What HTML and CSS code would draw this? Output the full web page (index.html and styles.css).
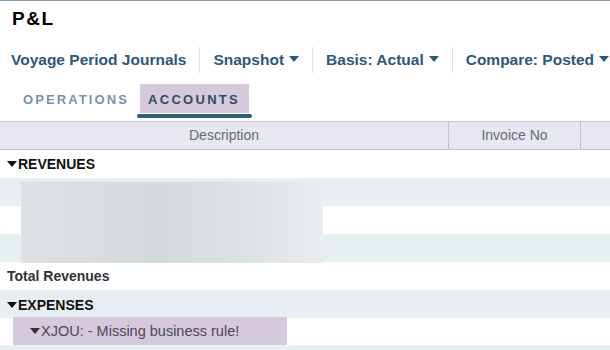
FILE: index.html
```html
<!DOCTYPE html>
<html>

<head>
    <meta charset="utf-8">
    <title>P&amp;L</title>
    <link rel="stylesheet" href="styles.css">
</head>

<body>
    <section id="report">
        <h1 class="report-title">P&amp;L</h1>
        <nav class="toolbar">
            <span class="tool-item">Voyage Period Journals</span>
            <span class="tool-item dropdown">Snapshot</span>
            <span class="tool-item dropdown">Basis: Actual</span>
            <span class="tool-item dropdown">Compare: Posted</span>
        </nav>
        <div class="tabs">
            <div class="tab"><span class="tab-label">OPERATIONS</span></div>
            <div class="tab active"><span class="tab-label">ACCOUNTS</span></div>
        </div>
        <div class="grid">
            <div class="grid-head">
                <div class="col col-desc">Description</div>
                <div class="col col-inv">Invoice No</div>
                <div class="col col-rest"></div>
            </div>
            <div class="grid-body">
                <div class="row group"><span class="caret"></span>REVENUES</div>
                <div class="row alt"></div>
                <div class="row"></div>
                <div class="row alt"></div>
                <div class="row total">Total Revenues</div>
                <div class="row alt group"><span class="caret"></span>EXPENSES</div>
                <div class="row">
                    <span class="rule-cell"><span class="caret"></span>XJOU: - Missing business rule!</span>
                </div>
                <div class="row alt"></div>
                <div class="redacted"></div>
            </div>
        </div>
    </section>
</body>

</html>
```

FILE: styles.css
```css
body {
    margin: 0;
    font-family: 'Liberation Sans', Arial, sans-serif;
    background: #fff;
    overflow: hidden;
}

#report {
    border-top: 1px solid #8a9bad;
}

.report-title {
    margin: 0;
    padding: 7px 0 0 12px;
    height: 37px;
    box-sizing: border-box;
    font-size: 19px;
    font-weight: 900;
    letter-spacing: 1.5px;
    color: #000;
    line-height: 22px;
}

.toolbar {
    display: flex;
    align-items: center;
    height: 26px;
    margin-top: 9px;
    padding-left: 11px;
}

.tool-item {
    font-size: 15.5px;
    font-weight: bold;
    color: #2e5877;
    line-height: 26px;
    padding-right: 13px;
    margin-right: 13px;
    border-right: 1px solid #dfe3e8;
    white-space: nowrap;
}

.tool-item:last-child {
    border-right: 0 none;
    margin-right: 0;
}

.dropdown::after {
    content: "";
    display: inline-block;
    margin-left: 5px;
    vertical-align: 3px;
    border-left: 5px solid transparent;
    border-right: 5px solid transparent;
    border-top: 6px solid #2e5877;
}

.tabs {
    display: flex;
    margin-top: 11px;
    padding-left: 15px;
    height: 37px;
}

.tab {
    display: flex;
    flex-direction: column;
    margin-right: 5px;
}

.tab-label {
    display: block;
    height: 29px;
    line-height: 31px;
    padding: 0 6px 0 8px;
    font-size: 13px;
    font-weight: bold;
    letter-spacing: 2.1px;
    color: #7d93a4;
}

.tab.active .tab-label {
    padding-right: 9px;
    background: #d5c9db;
    color: #2f4c64;
    letter-spacing: 2.3px;
}

.tab.active::after {
    content: "";
    display: block;
    height: 4px;
    margin: 1px -3px 0;
    border-radius: 2px;
    background: #2d5f7b;
}

.grid {
    position: relative;
}

.grid-head {
    display: flex;
    height: 27px;
    background: #e7e7f1;
    border-top: 1px solid #c9c3d9;
    border-bottom: 1px solid #c9c3d9;
}

.col {
    font-size: 14px;
    color: #666b7d;
    line-height: 27px;
    text-align: center;
}

.col-desc {
    width: 448px;
}

.col-inv {
    width: 131px;
    border-left: 1px solid #c3bdd3;
    border-right: 1px solid #c3bdd3;
}

.col-rest {
    flex: 1;
}

.grid-body {
    position: relative;
}

.row {
    height: 28px;
    line-height: 28px;
    padding-left: 7px;
    font-size: 14px;
    color: #222;
}

.row.alt {
    background: #e6eef1;
    border-top: 1px solid #edf2f4;
    height: 27px;
}

.row.group {
    font-weight: bold;
    color: #111;
}

.row.total {
    font-weight: bold;
    color: #333;
}

.caret {
    display: inline-block;
    vertical-align: 2px;
    margin-right: 1px;
    border-left: 5px solid transparent;
    border-right: 5px solid transparent;
    border-top: 6px solid #111;
}

.rule-cell {
    display: block;
    margin: -1px 0 0 6px;
    width: 257px;
    height: 29px;
    line-height: 29px;
    padding-left: 17px;
    background: #d5c9db;
    font-size: 14.5px;
    color: #4a4a55;
}

.rule-cell .caret {
    border-top-color: #333;
}

.redacted {
    position: absolute;
    left: 21px;
    top: 32px;
    width: 302px;
    height: 81px;
    background: linear-gradient(90deg, #dde1e3, #d4d9dc 45%, #dde2e4 75%, #e9edef);
}
```
